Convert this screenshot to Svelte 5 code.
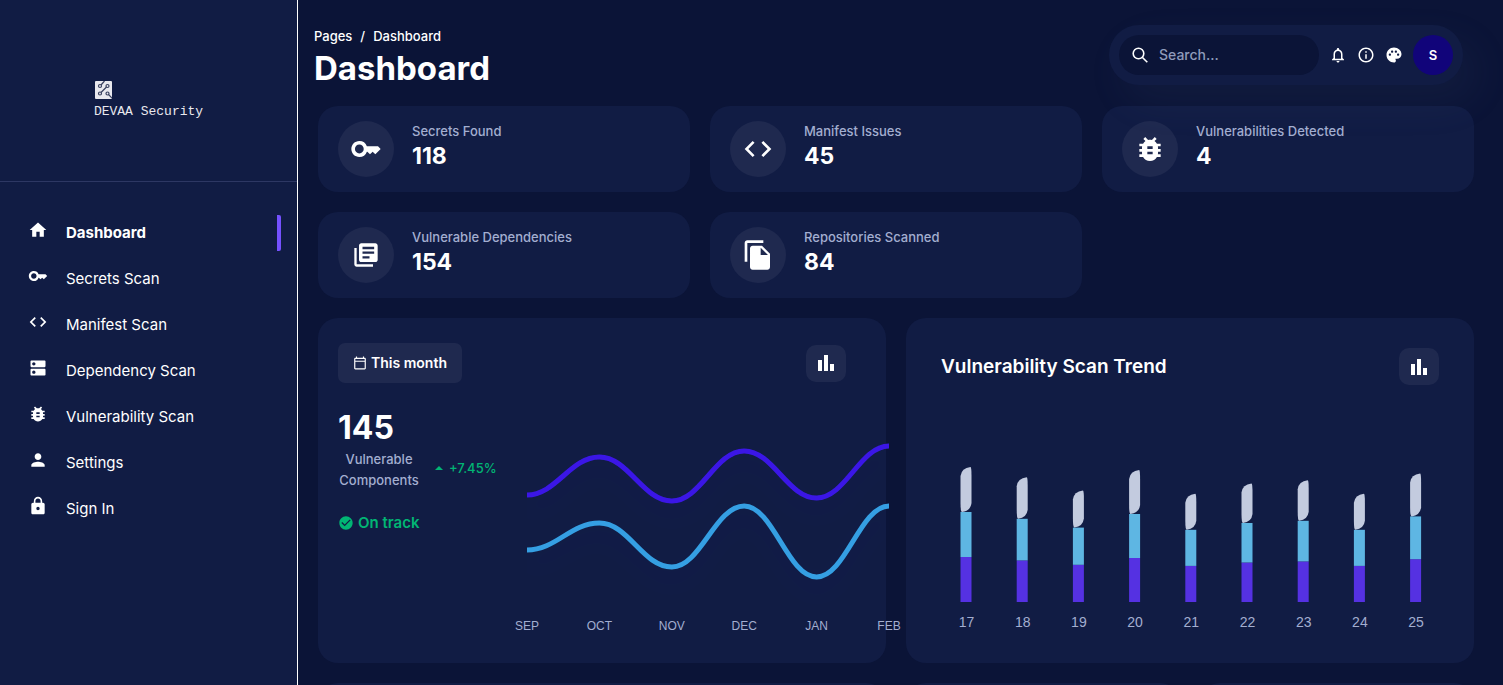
<script>
  const icons = {
    home: 'M10 20v-6h4v6h5v-8h3L12 3 2 12h3v8z',
    key: 'M21 10h-8.350A5.990 5.990 0 0 0 7 6c-3.310 0-6 2.690-6 6s2.690 6 6 6a5.990 5.990 0 0 0 5.650-4H13l2 2 2-2 2 2 4-4.040L21 10zM7 15.300c-1.820 0-3.300-1.480-3.300-3.300S5.180 8.700 7 8.700s3.300 1.480 3.300 3.300-1.480 3.300-3.300 3.300z',
    code: 'M9.4 16.6 4.8 12l4.6-4.6L8 6l-6 6 6 6 1.4-1.4zm5.2 0 4.6-4.6-4.6-4.6L16 6l6 6-6 6-1.4-1.4z',
    dns: 'M20 13H4c-.55 0-1 .45-1 1v6c0 .55.45 1 1 1h16c.55 0 1-.45 1-1v-6c0-.55-.45-1-1-1zM7 19c-1.100 0-2-.9-2-2s.9-2 2-2 2 .9 2 2-.9 2-2 2zM20 3H4c-.55 0-1 .45-1 1v6c0 .55.45 1 1 1h16c.55 0 1-.45 1-1V4c0-.55-.45-1-1-1zM7 9c-1.100 0-2-.9-2-2s.9-2 2-2 2 .9 2 2-.9 2-2 2z',
    bug: 'M20 8h-2.810c-.45-.78-1.070-1.450-1.820-1.960L17 4.410 15.590 3l-2.170 2.170C12.960 5.060 12.490 5 12 5c-.49 0-.96.06-1.410.17L8.410 3 7 4.410l1.620 1.630C7.880 6.550 7.260 7.220 6.810 8H4v2h2.090c-.05.33-.09.66-.09 1v1H4v2h2v1c0 .34.04.67.09 1H4v2h2.810c1.040 1.790 2.970 3 5.190 3s4.150-1.210 5.190-3H20v-2h-2.090c.05-.33.09-.66.09-1v-1h2v-2h-2v-1c0-.34-.04-.67-.09-1H20V8zm-6 8h-4v-2h4v2zm0-4h-4v-2h4v2z',
    person: 'M12 12c2.210 0 4-1.790 4-4s-1.790-4-4-4-4 1.790-4 4 1.790 4 4 4zm0 2c-2.670 0-8 1.340-8 4v2h16v-2c0-2.660-5.330-4-8-4z',
    lock: 'M18 8h-1V6c0-2.760-2.240-5-5-5S7 3.240 7 6v2H6c-1.100 0-2 .9-2 2v10c0 1.100.9 2 2 2h12c1.100 0 2-.9 2-2V10c0-1.100-.9-2-2-2zm-6 9c-1.100 0-2-.9-2-2s.9-2 2-2 2 .9 2 2-.9 2-2 2zm3.100-9H8.900V6c0-1.710 1.390-3.100 3.100-3.100s3.100 1.390 3.100 3.100v2z',
    books: 'M4 6H2v14c0 1.100.9 2 2 2h14v-2H4V6zm16-4H8c-1.100 0-2 .9-2 2v12c0 1.100.9 2 2 2h12c1.100 0 2-.9 2-2V4c0-1.100-.9-2-2-2zm-1 9H9V9h10v2zm-4 4H9v-2h6v2zm4-8H9V5h10v2z',
    copy: 'M16 1H4c-1.100 0-2 .9-2 2v14h2V3h12V1zm-1 4 6 6v10c0 1.100-.9 2-2 2H7.990C6.890 23 6 22.100 6 21l.01-14c0-1.100.89-2 1.990-2h7zm-1 7h5.500L14 6.500V12z',
    bars: 'M4 9h4v11H4zm12 4h4v7h-4zm-6-9h4v16h-4z',
    calendar: 'M20 3h-1V1h-2v2H7V1H5v2H4c-1.100 0-2 .9-2 2v16c0 1.100.9 2 2 2h16c1.100 0 2-.9 2-2V5c0-1.100-.9-2-2-2zm0 18H4V10h16v11zm0-13H4V5h16v3z',
    check: 'M12 2C6.480 2 2 6.480 2 12s4.480 10 10 10 10-4.480 10-10S17.520 2 12 2zm-2 15-5-5 1.410-1.410L10 14.170l7.590-7.590L19 8l-9 9z',
    up: 'm6 15 6-6 6 6z',
    bell: 'M12 22c1.100 0 2-.9 2-2h-4c0 1.100.9 2 2 2zm6-6v-5c0-3.070-1.630-5.640-4.500-6.320V4c0-.83-.67-1.500-1.500-1.500s-1.500.67-1.500 1.500v.68C7.640 5.360 6 7.920 6 11v5l-2 2v1h16v-1l-2-2zm-2 1H8v-6c0-2.480 1.510-4.500 4-4.500s4 2.020 4 4.500v6z',
    info: 'M11 7h2v2h-2zm0 4h2v6h-2zm1-9C6.480 2 2 6.480 2 12s4.480 10 10 10 10-4.480 10-10S17.520 2 12 2zm0 18c-4.410 0-8-3.590-8-8s3.590-8 8-8 8 3.590 8 8-3.590 8-8 8z',
    palette: 'M12 2C6.490 2 2 6.490 2 12s4.490 10 10 10c1.380 0 2.500-1.120 2.500-2.500 0-.61-.23-1.200-.64-1.670-.08-.1-.13-.21-.13-.33 0-.28.22-.5.5-.5H16c3.310 0 6-2.690 6-6 0-4.960-4.490-9-10-9zm-5.500 11c-.83 0-1.500-.67-1.500-1.500S5.670 10 6.500 10s1.500.67 1.500 1.500S7.330 13 6.500 13zm3-4C8.670 9 8 8.330 8 7.500S8.670 6 9.500 6s1.500.67 1.500 1.500S10.330 9 9.500 9zm5 0c-.83 0-1.500-.67-1.500-1.500S13.670 6 14.500 6s1.500.67 1.500 1.500S15.330 9 14.500 9zm3 4c-.83 0-1.500-.67-1.500-1.500s.67-1.500 1.500-1.500 1.500.67 1.500 1.500-.67 1.500-1.500 1.500z'
  };

  const nav = [
    ['home', 'Dashboard'],
    ['key', 'Secrets Scan'],
    ['code', 'Manifest Scan'],
    ['dns', 'Dependency Scan'],
    ['bug', 'Vulnerability Scan'],
    ['person', 'Settings'],
    ['lock', 'Sign In']
  ];

  const stats = [
    ['key', 'Secrets Found', 118],
    ['code', 'Manifest Issues', 45],
    ['bug', 'Vulnerabilities Detected', 4],
    ['books', 'Vulnerable Dependencies', 154],
    ['copy', 'Repositories Scanned', 84]
  ];

  const months = ['SEP', 'OCT', 'NOV', 'DEC', 'JAN', 'FEB'];
  const step = 72.4;

  // Smooth curve through the points with horizontal tangents at each of them
  function curve(ys) {
    return ys.reduce((d, y, i) => {
      const x = i * step;
      if (i === 0) return `M0 ${y}`;
      return `${d}C${x - step * 0.6} ${ys[i - 1]} ${x - step * 0.4} ${y} ${x} ${y}`;
    }, '');
  }
  const purple = curve([75, 37, 81, 31, 78, 26]);
  const blue = curve([130, 103, 147, 86, 157, 86]);

  const days = [
    [17, 45], [18, 41.600], [19, 37.200], [20, 44], [21, 36.100],
    [22, 39.500], [23, 40.600], [24, 36.100], [25, 42.800]
  ];
  const dayStep = 56.200;
  const cap = (h) => `M0 9Q1 1 10 0Q11 0 11 9V${h - 9}Q10 ${h - 1} 1.500 ${h}Q0 ${h} 0 ${h - 9}Z`;
</script>

{#snippet icon(name, size)}
  <svg width={size} height={size} viewBox="0 0 24 24" fill="currentColor" aria-hidden="true">
    <path d={icons[name]} />
  </svg>
{/snippet}

<div class="page">
  <aside>
    <div class="brand">
      <div>
        <svg width="17" height="18" viewBox="0 0 17 18" aria-hidden="true">
          <rect width="17" height="18" rx="1" fill="#e9e8ee" />
          <g fill="none" stroke="#39405f" stroke-width="1.200">
            <path d="M6 4 9.500 0M6 11.500 11.500 6M13.500 13.500 17 17" />
            <circle cx="5" cy="5" r="1.500" /><circle cx="12.500" cy="5" r="1.500" />
            <circle cx="5" cy="12.500" r="1.500" /><circle cx="12.500" cy="12.500" r="1.500" />
          </g>
        </svg>
        <span>DEVAA Security</span>
      </div>
    </div>
    <nav>
      {#each nav as [name, label], i}
        <a href="#{name}" class:active={i === 0}>
          {@render icon(name, 20)}
          <span>{label}</span>
        </a>
      {/each}
    </nav>
  </aside>

  <main>
    <header>
      <div>
        <div class="crumbs"><a href="#pages">Pages</a><span>/</span><a href="#home">Dashboard</a></div>
        <h1>Dashboard</h1>
      </div>
      <div class="tools">
        <label class="search">
          <svg width="16" height="16" viewBox="0 0 16 16" fill="none" stroke="currentColor" stroke-width="1.600" aria-hidden="true">
            <circle cx="6.500" cy="6.500" r="5.300" /><path d="m10.500 10.500 4.800 4.800" />
          </svg>
          <input type="search" placeholder="Search..." aria-label="Search" />
        </label>
        <button aria-label="Notifications">{@render icon('bell', 18)}</button>
        <button aria-label="Information">{@render icon('info', 18)}</button>
        <button aria-label="Theme">{@render icon('palette', 18)}</button>
        <button class="avatar">S</button>
      </div>
    </header>

    <section class="stats">
      {#each stats as [name, label, value]}
        <div class="card stat">
          <div class="disc">{@render icon(name, name === 'books' ? 28 : 32)}</div>
          <dl><dt>{label}</dt><dd>{value}</dd></dl>
        </div>
      {/each}
    </section>

    <section class="charts">
      <div class="card monthly">
        <div class="row">
          <button class="month">{@render icon('calendar', 14)}This month</button>
          <button class="square" aria-label="Chart options">{@render icon('bars', 24)}</button>
        </div>
        <div class="body">
          <div class="summary">
            <strong>145</strong>
            <div class="change">
              <span class="label">Vulnerable Components</span>
              <span class="gain">{@render icon('up', 16)}+7.45%</span>
            </div>
            <div class="track">{@render icon('check', 16)}On track</div>
          </div>
          <svg class="lines" width="402" height="224" viewBox="-20 0 402 224" role="img" aria-label="Components by month">
            <defs>
              <clipPath id="plot"><rect x="0" y="0" width="362" height="224" /></clipPath>
              <filter id="shade" x="-20%" y="-20%" width="140%" height="160%">
                <feDropShadow dx="0" dy="13" stdDeviation="10" flood-color="#1a10a0" flood-opacity="0.1" />
              </filter>
            </defs>
            <g fill="none" stroke-width="5" clip-path="url(#plot)" filter="url(#shade)">
              <path d={purple} stroke="#3a18e6" />
              <path d={blue} stroke="#349fe3" />
            </g>
            {#each months as month, i}
              <text x={i * step} y="210" font-size="12">{month}</text>
            {/each}
          </svg>
        </div>
      </div>

      <div class="card trend">
        <div class="row">
          <h2>Vulnerability Scan Trend</h2>
          <button class="square" aria-label="Chart options">{@render icon('bars', 24)}</button>
        </div>
        <svg class="columns" viewBox="0 0 508 224" role="img" aria-label="Scans by day">
          {#each days as [day, h], i}
            <g transform="translate({24.500 + i * dayStep} 0)">
              <rect y={181 - h} width="11" height={h} fill="#5531e2" />
              <rect y={181 - 2 * h} width="11" height={h} fill="#5eb6e3" />
              <path transform="translate(0 {181 - 3 * h})" d={cap(h)} fill="#c3cbdf" />
              <text x="6" y="206" font-size="14">{day}</text>
            </g>
          {/each}
        </svg>
      </div>
    </section>

    <section class="charts">
      <div class="card next"></div>
      <div class="pair"><div class="card next"></div><div class="card next"></div></div>
    </section>
  </main>
</div>

<style>
  :global(body) { margin: 0; background: #0b1437; }
  .page {
    box-sizing: border-box;
    display: flex;
    height: 100vh;
    overflow: hidden;
    color: #fff;
    font: 500 14px/20px Inter, sans-serif;
  }
  a { color: inherit; text-decoration: none; }
  button { border: 0; padding: 0; background: none; color: inherit; font: inherit; cursor: pointer; }
  svg { display: block; flex: none; }
  h1, h2, dl, dd { margin: 0; }

  aside { flex: 0 0 297px; background: #111c44; border-right: 1px solid #fff; }
  .brand {
    display: flex;
    justify-content: center;
    padding: 81px 0 61px;
    border-bottom: 1px solid #2d3763;
    color: #e9e8ee;
    font: 13px/16px "Liberation Mono", monospace;
  }
  .brand svg { margin: 0 0 5px 1px; }
  nav { padding: 33px 16px 0 28px; }
  nav a { display: flex; align-items: center; gap: 18px; height: 36px; margin-bottom: 10px; font-size: 15px; font-weight: 400; }
  nav a svg { margin-bottom: 6px; }
  nav .active { border-right: 4px solid #7551ff; border-radius: 2px; font-weight: 700; }

  main { flex: 1; min-width: 0; padding: 25px 29px 0 20px; }
  header { display: flex; justify-content: space-between; height: 81px; padding-right: 11px; }
  .crumbs { display: flex; gap: 8px; margin: 1px 0 0 -4px; font-size: 13px; }
  h1 { margin-left: -4px; font-size: 33px; line-height: 44px; font-weight: 700; }
  .tools {
    position: relative;
    display: flex;
    align-items: center;
    box-sizing: border-box;
    gap: 10px;
    height: 60px;
    padding: 10px;
    border-radius: 30px;
    background: #111c44;
    box-shadow: 14px 17px 40px 4px rgba(112, 144, 176, 0.06);
  }
  .search {
    display: flex;
    align-items: center;
    box-sizing: border-box;
    width: 200px;
    height: 40px;
    padding: 0 13px;
    gap: 11px;
    border-radius: 30px;
    background: #0b1437;
  }
  input { min-width: 0; flex: 1; padding: 0; border: 0; outline: 0; background: none; color: #fff; font: inherit; }
  input::placeholder { color: #8f9bba; opacity: 1; }
  .avatar { width: 40px; height: 40px; border-radius: 50%; background: #11047a; font-size: 13px; font-weight: 600; }

  .card { background: #111c44; border-radius: 20px; }
  .stats { display: grid; grid-template-columns: repeat(3, 1fr); gap: 20px; }
  .stat { display: flex; align-items: center; gap: 18px; padding: 15px 20px; }
  .disc { display: grid; place-items: center; width: 56px; height: 56px; border-radius: 50%; background: #1f294f; }
  dt { color: #a3aed0; font-size: 13px; }
  dd { font-size: 23px; line-height: 30px; font-weight: 700; }
  dl { height: 56px; }

  .charts { display: grid; grid-template-columns: 1fr 1fr; gap: 20px; margin-top: 20px; }
  .row { display: flex; justify-content: space-between; align-items: center; }
  .square { display: grid; place-items: center; width: 40px; height: 37px; border-radius: 10px; background: #1f294f; }
  .monthly { box-sizing: border-box; min-width: 0; height: 345px; padding: 25px 20px; }
  .monthly .row { padding-right: 20px; }
  .month {
    display: flex;
    align-items: center;
    justify-content: center;
    gap: 4px;
    width: 124px;
    height: 40px;
    border-radius: 7px;
    background: #1f294f;
    font-weight: 600;
  }
  .body { display: flex; gap: 10px; padding-top: 24px; }
  .summary { flex: 0 0 157px; padding-top: 2px; }
  strong { display: block; font-size: 32px; line-height: 38px; }
  .change { display: flex; align-items: center; gap: 11px; margin-top: 2px; }
  .label { width: 82px; color: #a3aed0; font-size: 13px; line-height: 21px; text-align: center; }
  .gain { display: flex; align-items: center; gap: 2px; margin-bottom: 4px; color: #01b574; font-size: 13px; }
  .track { display: flex; align-items: center; gap: 4px; margin-top: 22px; color: #01b574; font-size: 15px; font-weight: 600; }
  .lines { margin-top: 13px; overflow: visible; }
  text { fill: #a3aed0; font-family: "Liberation Sans", sans-serif; font-weight: 400; text-anchor: middle; }

  .trend { box-sizing: border-box; min-width: 0; padding: 30px 30px 0; }
  .trend .row { padding: 0 5px; }
  h2 { font-size: 19px; line-height: 28px; font-weight: 600; }
  .columns { width: 100%; margin-top: 36px; }
  .pair { display: grid; grid-template-columns: 1fr 1fr; gap: 20px; }
  .next { height: 200px; }
</style>
